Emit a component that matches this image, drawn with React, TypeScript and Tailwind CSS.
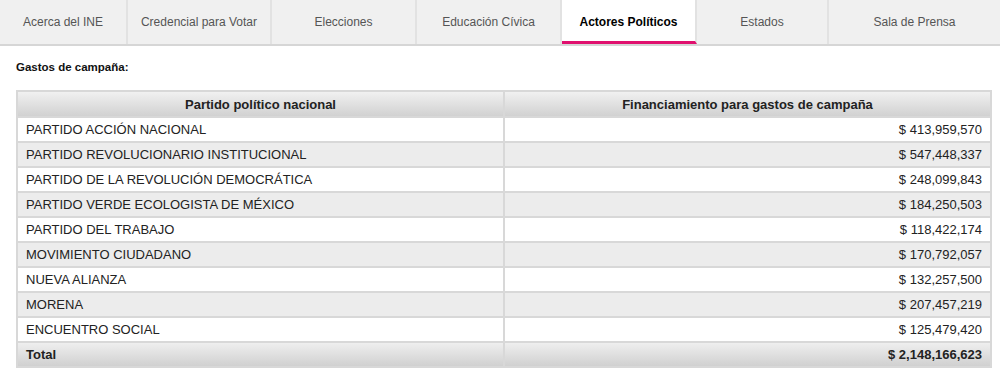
import React from 'react';

const tabs = [
  { label: 'Acerca del INE', w: 'w-[128px]' },
  { label: 'Credencial para Votar', w: 'w-[144px]' },
  { label: 'Elecciones', w: 'w-[145px]' },
  { label: 'Educación Cívica', w: 'w-[145px]' },
  { label: 'Actores Políticos', w: 'w-[135px]', active: true },
  { label: 'Estados', w: 'w-[132px]' },
  { label: 'Sala de Prensa', w: 'w-[171px]' },
];

const rows = [
  ['PARTIDO ACCIÓN NACIONAL', '$ 413,959,570'],
  ['PARTIDO REVOLUCIONARIO INSTITUCIONAL', '$ 547,448,337'],
  ['PARTIDO DE LA REVOLUCIÓN DEMOCRÁTICA', '$ 248,099,843'],
  ['PARTIDO VERDE ECOLOGISTA DE MÉXICO', '$ 184,250,503'],
  ['PARTIDO DEL TRABAJO', '$ 118,422,174'],
  ['MOVIMIENTO CIUDADANO', '$ 170,792,057'],
  ['NUEVA ALIANZA', '$ 132,257,500'],
  ['MORENA', '$ 207,457,219'],
  ['ENCUENTRO SOCIAL', '$ 125,479,420'],
];

export default function App() {
  return (
    <div className="w-[1000px] h-[374px] bg-white font-['Liberation_Sans',Arial,sans-serif] overflow-hidden">
      {/* Tabs */}
      <div className="flex h-[46px] border-b-2 border-[#d6d6d6] bg-[#f0f0f0]">
        {tabs.map((t, i) => (
          <div
            key={t.label}
            className={`${t.w} flex items-center justify-center text-[12px] ${
              i < tabs.length - 1 ? 'border-r-2 border-[#e2e2e2]' : ''
            } ${
              t.active
                ? 'bg-white text-black font-bold border-b-[3px] border-b-[#e0106e] pt-[3px]'
                : 'text-[#555]'
            }`}
          >
            {t.label}
          </div>
        ))}
      </div>

      <div className="px-4">
        <div className="pt-[13px] pb-[14px] text-[11.5px] font-bold text-[#111]">Gastos de campaña:</div>

        <table className="w-[976px] border-collapse text-[13px] text-[#222]">
          <thead>
            <tr className="h-[26px] bg-gradient-to-b from-[#f2f2f2] to-[#d0d0d0]">
              <th className="w-[487px] border-2 border-[#d8d8d8] font-bold text-center">Partido político nacional</th>
              <th className="border-2 border-[#d8d8d8] font-bold text-center">Financiamiento para gastos de campaña</th>
            </tr>
          </thead>
          <tbody>
            {rows.map(([name, amount], i) => (
              <tr key={name} className={`h-[25px] ${i % 2 === 1 ? 'bg-[#ececec]' : 'bg-white'}`}>
                <td className="border-2 border-[#d8d8d8] px-2">{name}</td>
                <td className="border-2 border-[#d8d8d8] px-2 text-right">{amount}</td>
              </tr>
            ))}
            <tr className="h-[25px] bg-gradient-to-b from-[#f0f0f0] to-[#cfcfcf] font-bold">
              <td className="border-2 border-[#d8d8d8] px-2">Total</td>
              <td className="border-2 border-[#d8d8d8] px-2 text-right">$ 2,148,166,623</td>
            </tr>
          </tbody>
        </table>
      </div>
    </div>
  );
}
